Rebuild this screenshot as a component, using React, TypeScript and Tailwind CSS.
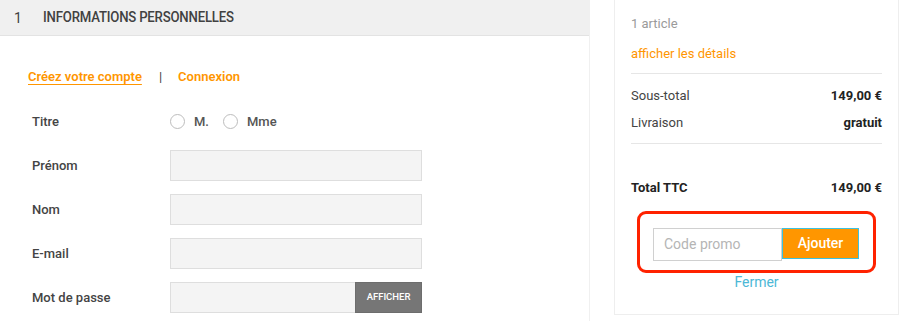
import React from "react";

const Radio = ({ label }: { label: string }) => (
  <label className="flex items-center gap-[9px]">
    <span className="w-[15px] h-[15px] rounded-full border border-[#bdbdbd] bg-white" />
    <span className="text-[13px] font-medium text-[#555]">{label}</span>
  </label>
);

const Field = ({ label, children }: { label: string; children: React.ReactNode }) => (
  <div className="flex items-center h-[31px]">
    <div className="w-[138px] text-[13px] font-medium text-[#444]">{label}</div>
    {children}
  </div>
);

const Input = () => (
  <div className="w-[252px] h-[31px] bg-[#f4f4f4] border border-[#dedede]" />
);

export default function App() {
  return (
    <div
      className="w-[900px] h-[321px] overflow-hidden bg-white flex"
      style={{ fontFamily: "Roboto, 'Liberation Sans', sans-serif" }}
    >
      <div className="w-[590px] shrink-0 border-r border-[#f0f0f0] flex flex-col">
        <div className="h-[36px] bg-[#f0f0f0] border-b border-[#e3e3e3] flex items-center">
          <span className="ml-[14px] w-[29px] text-[14px] text-[#414141] pt-[2px]">1</span>
          <span className="text-[14px] font-medium text-[#414141] uppercase tracking-[-0.2px] scale-x-[0.94] origin-left">
            Informations personnelles
          </span>
        </div>
        <div className="pl-[28px] pt-[31px] flex items-center h-[51px] text-[13px] font-semibold text-[#ff9600]">
          <span className="underline underline-offset-[3px]">Créez votre compte</span>
          <span className="ml-[17px] text-[#444] font-normal">|</span>
          <span className="ml-[16px]">Connexion</span>
        </div>
        <div className="pl-[32px] mt-[19px] flex flex-col gap-[13px]">
          <Field label="Titre">
            <div className="flex items-center gap-[14px]">
              <Radio label="M." />
              <Radio label="Mme" />
            </div>
          </Field>
          <Field label="Prénom">
            <Input />
          </Field>
          <Field label="Nom">
            <Input />
          </Field>
          <Field label="E-mail">
            <Input />
          </Field>
          <Field label="Mot de passe">
            <div className="w-[252px] h-[31px] bg-[#f4f4f4] border border-[#dedede] flex justify-end">
              <div className="w-[67px] -my-px -mr-px bg-[#767676] border border-[#6d6d6d] flex items-center justify-center text-[9.5px] font-medium text-white">
                AFFICHER
              </div>
            </div>
          </Field>
        </div>
      </div>
      <div className="pl-[24px]">
        <div className="w-[285px] h-[315px] border-x border-b border-[#eeeeee] px-[16px] flex flex-col">
          <div className="mt-[14px] h-[20px] flex items-center text-[13px] text-[#9a9a9a]">1 article</div>
          <div className="mt-[10px] h-[20px] flex items-center text-[13px] text-[#ff9600]">afficher les détails</div>
          <div className="mt-[9px] border-t border-[#e6e6e6]" />
          <div className="mt-[12px] h-[20px] flex items-center justify-between text-[13px]">
            <span className="text-[#444]">Sous-total</span>
            <span className="font-bold text-[#222]">149,00 €</span>
          </div>
          <div className="mt-[7px] h-[20px] flex items-center justify-between text-[13px]">
            <span className="text-[#444]">Livraison</span>
            <span className="font-bold text-[#222]">gratuit</span>
          </div>
          <div className="mt-[10px] border-t border-[#e6e6e6]" />
          <div className="mt-[34px] h-[20px] flex items-center justify-between text-[13px] font-bold text-[#222]">
            <span>Total TTC</span>
            <span>149,00 €</span>
          </div>
          <div className="mt-[13px] mx-[6px] h-[62px] border-[3px] border-[#ff2200] rounded-[9px] flex items-start pl-[13px] pt-[14px]">
            <div className="w-[129px] h-[33px] border border-[#d0d0d0] bg-white flex items-center pl-[10px] text-[14px] text-[#b5b5b5]">
              Code promo
            </div>
            <div className="w-[77px] h-[31px] bg-[#ff9600] border border-[#3cc2df] flex items-center justify-center text-[14px] font-medium text-white">
              Ajouter
            </div>
          </div>
          <div className="mt-[1px] text-center text-[14px] text-[#4cb8d6] leading-[16px]">Fermer</div>
        </div>
      </div>
    </div>
  );
}
